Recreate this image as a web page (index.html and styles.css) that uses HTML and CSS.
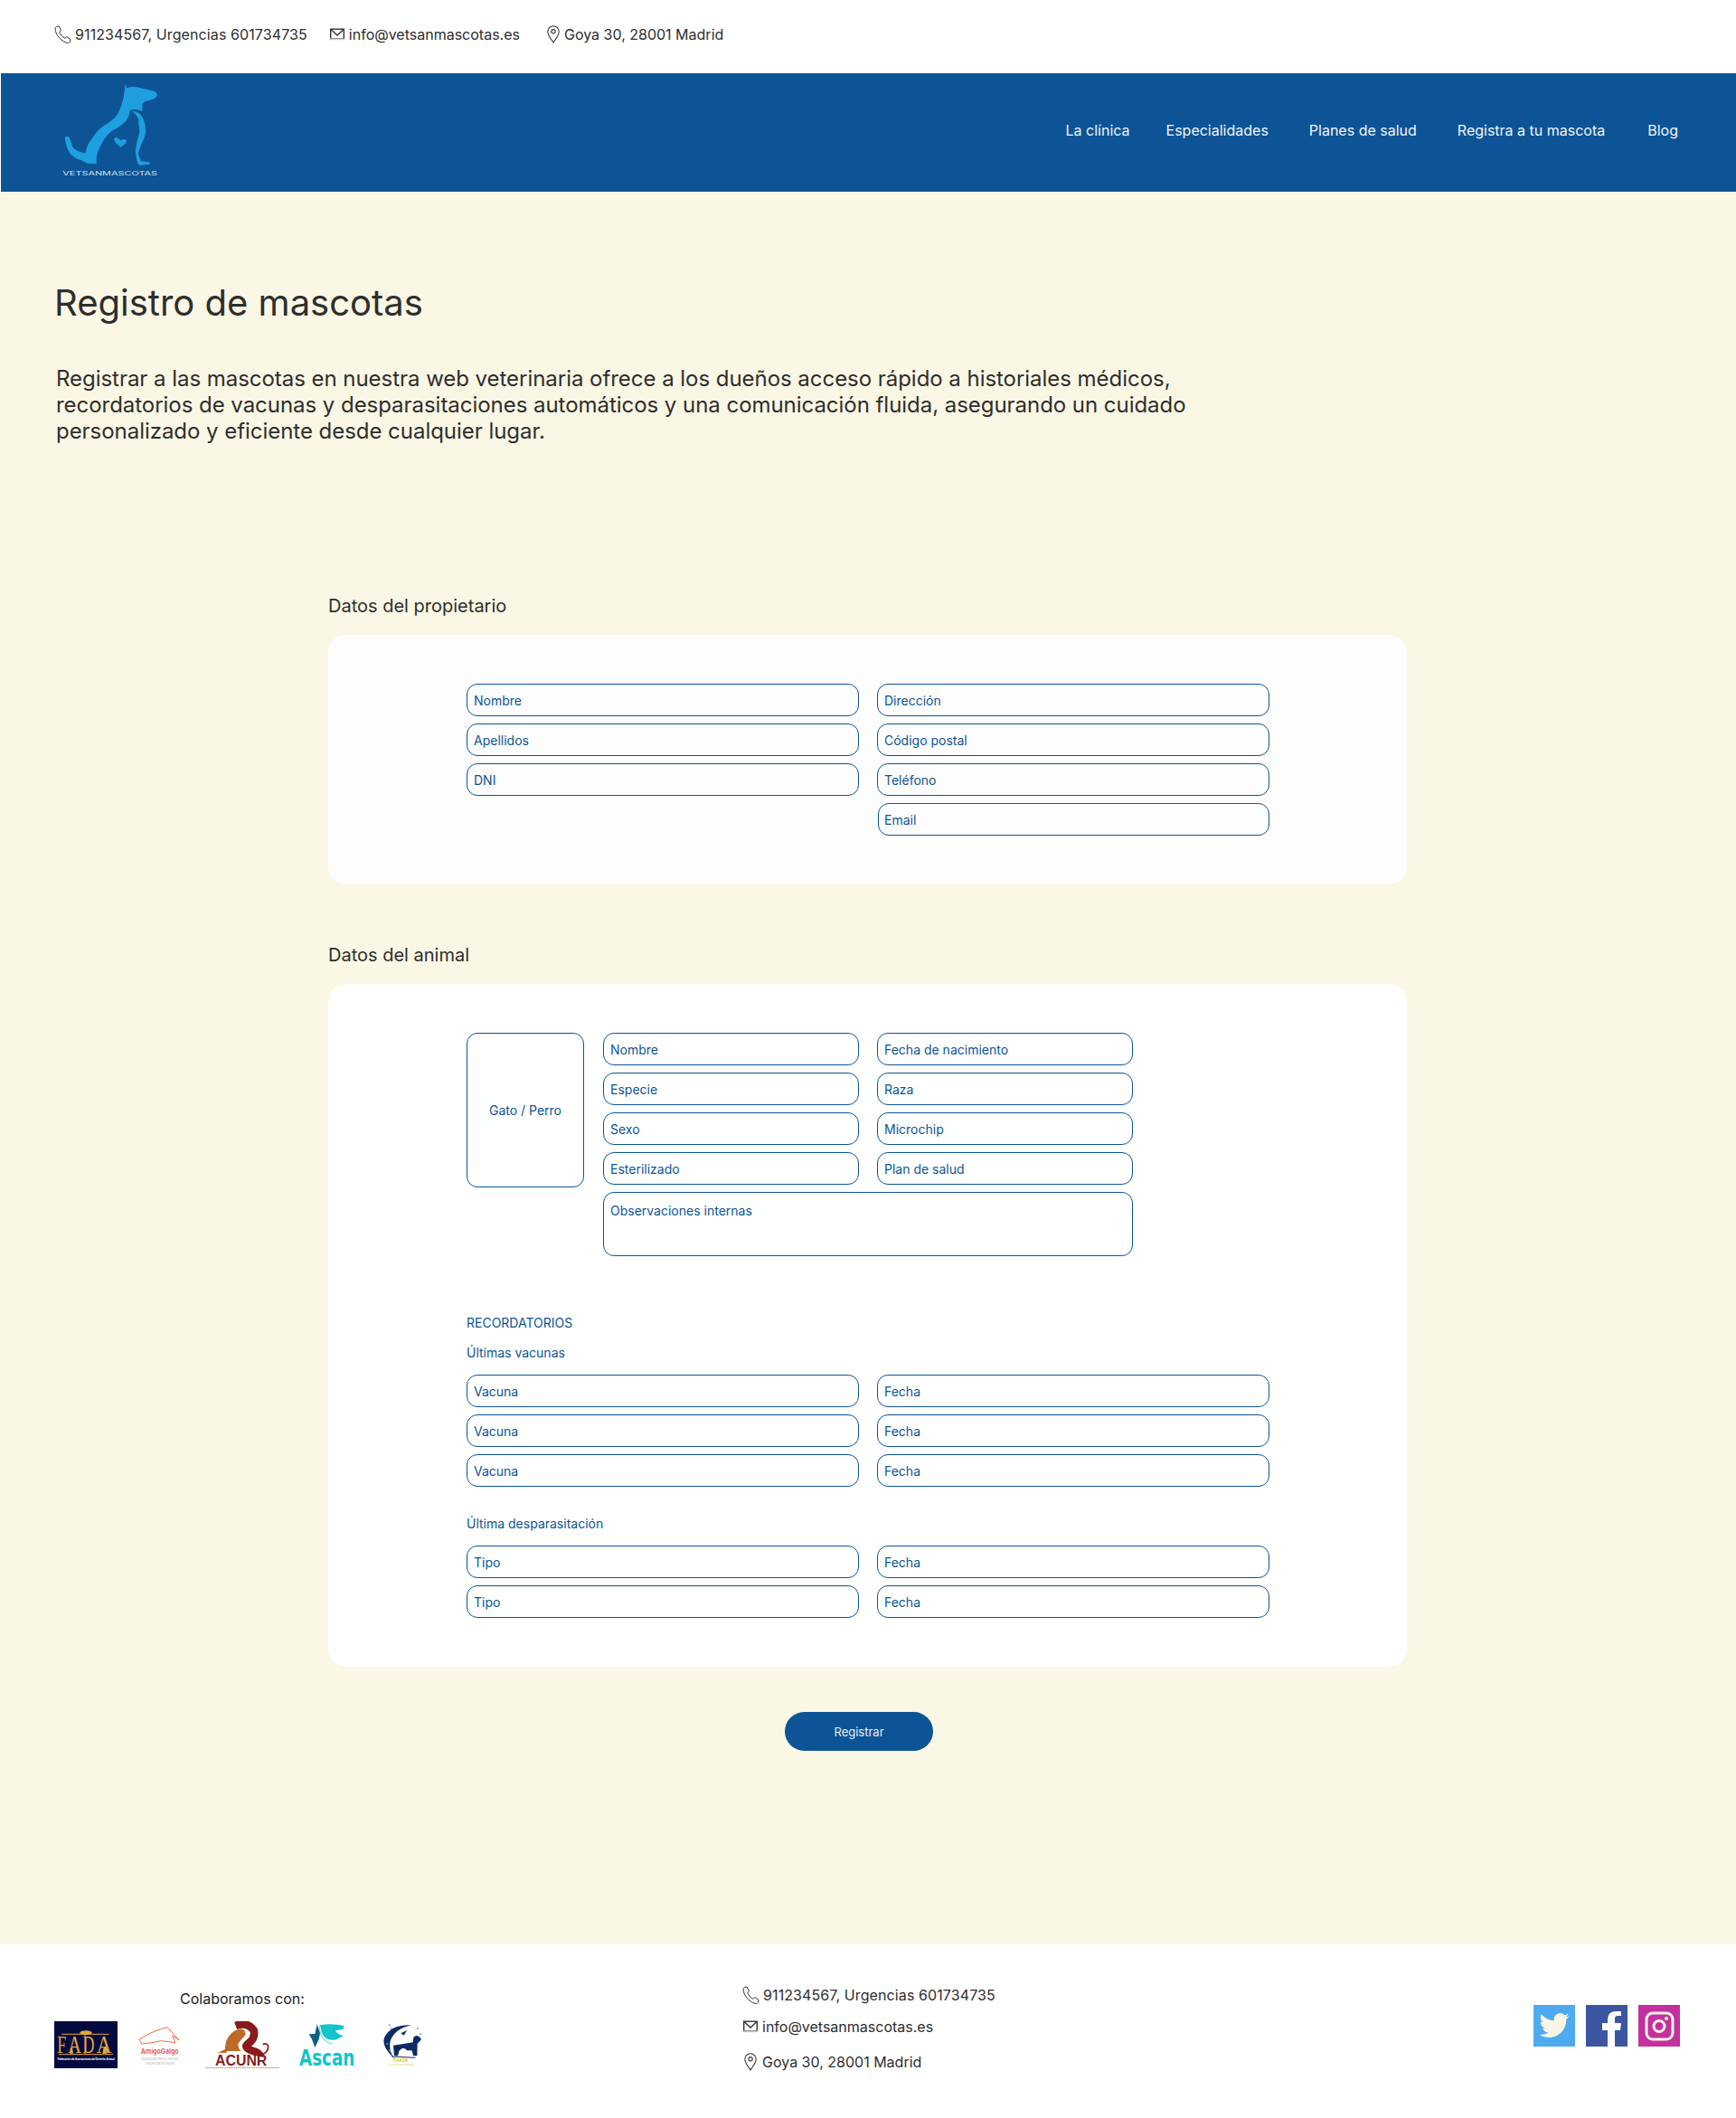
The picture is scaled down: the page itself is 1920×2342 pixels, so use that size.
FILE: index.html
```html
<!DOCTYPE html>
<html lang="es">
<head>
<meta charset="utf-8">
<title>Registro de mascotas</title>
<link rel="stylesheet" href="styles.css">
</head>
<body>
<svg class="defs" width="0" height="0" aria-hidden="true">
  <symbol id="i-phone" viewBox="0 0 20 20"><path d="M2.2 1.6 5 .9l2.6 4.6-1.9 1.7c.7 2.6 3.600 6 6.200 7.100l2-1.800 4.200 3.200-.9 2.800c-.3.700-1.100 1-1.900 1C8.800 18.800 1.200 10.800 1 3.700c0-.9.400-1.700 1.200-2.100Z" fill="none" stroke="currentColor" stroke-width="1" stroke-linejoin="round"/></symbol>
  <symbol id="i-mail" viewBox="0 0 16 14"><rect x="0.700" y="1.200" width="14.600" height="10.800" fill="none" stroke="#333" stroke-width="1.400"/><path d="M1 1.500 8 8l7-6.500" fill="none" stroke="#333" stroke-width="1.400"/><rect x="0" y="11.600" width="16" height="1.600" fill="#ccc"/></symbol>
  <symbol id="i-pin" viewBox="0 0 14 20"><path d="M7 19C4.500 15 .8 11.200.8 7a6.200 6.200 0 0 1 12.400 0C13.200 11.200 9.500 15 7 19Z" fill="none" stroke="#333" stroke-width="1.100"/><circle cx="7" cy="6.800" r="2.200" fill="none" stroke="#333" stroke-width="1.100"/></symbol>
</svg>

<header class="topbar">
  <div class="contact-item contact-phone"><svg class="icon-phone"><use href="#i-phone"/></svg><span class="phone-text">911234567, Urgencias 601734735</span></div>
  <div class="contact-item contact-mail"><svg class="icon-mail"><use href="#i-mail"/></svg><span>info@vetsanmascotas.es</span></div>
  <div class="contact-item contact-pin"><svg class="icon-pin"><use href="#i-pin"/></svg><span>Goya 30, 28001 Madrid</span></div>
</header>

<nav class="navbar">
  <svg class="logo" viewBox="0 3 480 393" role="img" aria-label="VetsanMascotas">
    <path class="logo-shape" d="M296 36 L301 52 Q322 44 345 52 L392 62 Q405 68 400 80 Q390 92 362 96 L352 104 L352 130 Q330 118 312 126 L305 150 Q295 172 250 195 Q225 215 207 258 Q198 280 200 304 L170 302 L150 292 Q125 285 113 270 Q98 245 95 218 Q100 208 110 216 L122 250 Q135 264 164 268 Q170 235 185 220 Q200 195 220 180 Q245 165 262 150 Q285 120 292 70 Z"/>
    <path class="logo-shape" d="M318 128 Q345 130 353 150 Q368 180 361 212 Q345 245 338 270 L348 295 L375 298 L378 305 L342 308 L336 300 L329 265 Q332 230 343 200 L340 170 Q345 150 318 128 Z"/>
    <path class="logo-shape" d="M280 248 Q262 235 258 222 Q262 212 272 218 L280 226 Q292 218 300 226 Q300 238 280 248 Z"/>
    <text class="logo-text" x="88" y="342" textLength="314" lengthAdjust="spacingAndGlyphs">VETSANMASCOTAS</text>
  </svg>
  <ul class="nav-links">
    <li>La clínica</li>
    <li>Especialidades</li>
    <li>Planes de salud</li>
    <li>Registra a tu mascota</li>
    <li>Blog</li>
  </ul>
</nav>

<main class="page">
  <h1 class="page-title">Registro de mascotas</h1>
  <p class="page-intro">Registrar a las mascotas en nuestra web veterinaria ofrece a los dueños acceso rápido a historiales médicos, recordatorios de vacunas y desparasitaciones automáticos y una comunicación fluida, asegurando un cuidado personalizado y eficiente desde cualquier lugar.</p>

  <section class="form-wrap">
    <h2 class="section-title">Datos del propietario</h2>
    <div class="card card-owner">
      <div class="pair-grid">
        <div class="field">Nombre</div><div class="field">Dirección</div>
        <div class="field">Apellidos</div><div class="field">Código postal</div>
        <div class="field">DNI</div><div class="field">Teléfono</div>
        <div class="spacer"></div><div class="field field-nudge">Email</div>
      </div>
    </div>

    <h2 class="section-title section-title-second">Datos del animal</h2>
    <div class="card">
      <div class="animal-top">
        <div class="field photo">Gato / Perro</div>
        <div class="animal-grid">
          <div class="field">Nombre</div><div class="field">Fecha de nacimiento</div>
          <div class="field">Especie</div><div class="field">Raza</div>
          <div class="field">Sexo</div><div class="field">Microchip</div>
          <div class="field">Esterilizado</div><div class="field">Plan de salud</div>
          <div class="field notes">Observaciones internas</div>
        </div>
      </div>

      <h3 class="reminder-head">RECORDATORIOS</h3>
      <h4 class="reminder-sub">Últimas vacunas</h4>
      <div class="pair-grid">
        <div class="field">Vacuna</div><div class="field">Fecha</div>
        <div class="field">Vacuna</div><div class="field">Fecha</div>
        <div class="field">Vacuna</div><div class="field">Fecha</div>
      </div>
      <h4 class="reminder-sub reminder-sub-second">Última desparasitación</h4>
      <div class="pair-grid">
        <div class="field">Tipo</div><div class="field">Fecha</div>
        <div class="field">Tipo</div><div class="field">Fecha</div>
      </div>
    </div>

    <button class="submit" type="button">Registrar</button>
  </section>
</main>

<footer class="footer">
  <div class="partners">
    <p class="partners-title">Colaboramos con:</p>
    <svg class="partner-logos" viewBox="180 165 1230 165" role="img" aria-label="Logos de FADA, AmigoGalgo, ACUNR, Ascan y FAADA">
      <!-- FADA -->
      <rect x="180" y="165" width="210" height="156" fill="#020b3f"/>
      <path d="M205 208 H362 M282 198 V275 M195 275 H375" fill="none" stroke="#e3a63f" stroke-width="3"/>
      <ellipse cx="285" cy="203" rx="20" ry="7" fill="#e3a63f"/>
      <text class="fada-letter" x="190" y="270" textLength="30" lengthAdjust="spacingAndGlyphs">F</text>
      <text class="fada-letter" x="226" y="270" textLength="44" lengthAdjust="spacingAndGlyphs">A</text>
      <text class="fada-letter" x="275" y="270" textLength="38" lengthAdjust="spacingAndGlyphs">D</text>
      <text class="fada-letter" x="320" y="270" textLength="50" lengthAdjust="spacingAndGlyphs">A</text>
      <path d="M233 272 V255 L240 252 L243 272 Z M340 272 L343 255 L350 250 L358 260 L354 272 Z" fill="#e3a63f"/>
      <text class="fada-caption" x="191" y="293" textLength="189" lengthAdjust="spacingAndGlyphs">Federación de Asociaciones de Derecho Animal</text>
      <!-- AmigoGalgo -->
      <path d="M462 225 Q510 195 555 185 L595 228 L572 212 L582 236 L535 230 Q500 238 470 240 Z" fill="none" stroke="#f0644a" stroke-width="3"/>
      <text class="galgo-name" x="530" y="272" textLength="126" lengthAdjust="spacingAndGlyphs">AmigoGalgo</text>
      <path d="M460 276 H600" stroke="#ddd" stroke-width="1.500"/>
      <text class="galgo-sub" x="530" y="293" textLength="125" lengthAdjust="spacingAndGlyphs">ASOCIACIÓN PARA EL RESCATE</text>
      <text class="galgo-sub" x="530" y="308" textLength="100" lengthAdjust="spacingAndGlyphs">Y ADOPCIÓN DE GALGOS</text>
      <!-- ACUNR -->
      <path d="M746 264 Q746 225 768 205 Q780 193 800 190 L812 196 L815 210 Q800 225 790 240 Q790 255 800 264 Z M722 270 L752 256 L752 270 Z" fill="#bd6a28"/>
      <path d="M782 180 Q820 165 842 195 Q848 225 822 240 Q808 252 835 262 Q865 270 862 282" fill="none" stroke="#8a1a1c" stroke-width="26"/>
      <path d="M860 278 Q890 272 890 248 Q885 235 872 242" fill="none" stroke="#8a1a1c" stroke-width="5"/>
      <text class="acunr-name" x="800" y="312" textLength="172" lengthAdjust="spacingAndGlyphs">ACUNR</text>
      <path d="M681 319.500 H928" stroke="#d9824d" stroke-width="3" stroke-dasharray="4 2"/>
      <!-- Ascan -->
      <path d="M1062 178 Q1100 170 1142 180 L1138 192 L1112 196 Q1125 212 1140 214 L1115 226 Q1080 232 1068 205 Z" fill="#13c4c8"/>
      <path d="M1060 180 Q1060 228 1102 240" fill="none" stroke="#7fe3e3" stroke-width="4"/>
      <path d="M1052 175 L1062 205 L1058 225 L1045 252 L1035 225 L1025 208 L1045 207 Z" fill="#115f85"/>
      <text class="ascan-name" x="1085" y="312" textLength="184" lengthAdjust="spacingAndGlyphs">Ascan</text>
      <!-- FAADA -->
      <path d="M1310 290 Q1265 250 1275 220 Q1295 175 1365 178 Q1310 190 1295 230 Q1288 265 1310 290 Z" fill="#0e2a66"/>
      <path d="M1305 245 Q1340 240 1370 235 L1372 218 Q1385 205 1398 225 L1385 240 L1384 280 L1372 280 L1366 262 L1325 262 L1320 280 L1308 280 Z" fill="#0e2a66"/>
      <path d="M1326 282 L1326 262 Q1338 246 1352 264 L1352 282 Z" fill="#fff"/>
      <path d="M1300 282 L1378 286" stroke="#0e2a66" stroke-width="3"/>
      <path d="M1330 205 L1350 195 L1340 212 Z" fill="#0e2a66"/>
      <g fill="#6a9fd0"><circle cx="1292" cy="178" r="3"/><circle cx="1298" cy="190" r="3"/><circle cx="1385" cy="190" r="3"/><circle cx="1395" cy="207" r="3"/><circle cx="1285" cy="240" r="3"/><circle cx="1292" cy="262" r="3"/></g>
      <text class="faada-name" x="1330" y="299" textLength="48" lengthAdjust="spacingAndGlyphs">FAADA</text>
      <text class="faada-sub" x="1332" y="311" textLength="84" lengthAdjust="spacingAndGlyphs">LA VOZ DE LOS ANIMALES</text>
    </svg>
  </div>

  <div class="footer-contact">
    <div class="contact-item footer-phone"><svg class="icon-phone"><use href="#i-phone"/></svg><span class="phone-text">911234567, Urgencias 601734735</span></div>
    <div class="contact-item footer-mail"><svg class="icon-mail"><use href="#i-mail"/></svg><span>info@vetsanmascotas.es</span></div>
    <div class="contact-item footer-pin"><svg class="icon-pin"><use href="#i-pin"/></svg><span>Goya 30, 28001 Madrid</span></div>
  </div>

  <div class="social">
    <svg class="social-icon" viewBox="0 0 46 46" role="img" aria-label="Twitter"><rect width="46" height="46" fill="#4fabf1"/><path transform="translate(6.500 6) scale(1.380)" fill="#faf6e3" d="M23.953 4.570a10 10 0 01-2.825.775 4.958 4.958 0 002.163-2.723c-.951.555-2.005.959-3.127 1.184a4.920 4.920 0 00-8.384 4.482C7.690 8.095 4.067 6.130 1.640 3.162a4.822 4.822 0 00-.666 2.475c0 1.710.870 3.213 2.188 4.096a4.904 4.904 0 01-2.228-.616v.060a4.923 4.923 0 003.946 4.827 4.996 4.996 0 01-2.212.085 4.936 4.936 0 004.604 3.417 9.867 9.867 0 01-6.102 2.105c-.390 0-.779-.023-1.170-.067a13.995 13.995 0 007.557 2.209c9.053 0 13.998-7.496 13.998-13.985 0-.210 0-.420-.015-.630A9.935 9.935 0 0024 4.590z"/></svg>
    <svg class="social-icon" viewBox="0 0 46 46" role="img" aria-label="Facebook"><rect width="46" height="46" fill="#3b55a0"/><path fill="#fff" d="M32 46V28h6l1-8h-7v-5q0-3 3-3h4V7h-5q-10 0-10 9v4h-6v8h6v18Z"/></svg>
    <svg class="social-icon" viewBox="0 0 46 46" role="img" aria-label="Instagram"><rect width="46" height="46" fill="#c4309f"/><rect x="9" y="9" width="29" height="29" rx="7" fill="none" stroke="#faf6e3" stroke-width="3"/><circle cx="23" cy="23.500" r="6" fill="none" stroke="#faf6e3" stroke-width="3"/><circle cx="31" cy="15" r="2" fill="#faf6e3"/></svg>
  </div>
</footer>
</body>
</html>
```

FILE: styles.css
```css
* { box-sizing: border-box; }
html, body { margin: 0; padding: 0; }
body {
  font-family: Inter, "Liberation Sans", sans-serif;
  color: #2e2e2e;
  background: #fff;
  width: 1920px;
}
.defs { position: absolute; }

.topbar {
  height: 81px;
  display: flex;
  align-items: center;
  padding-left: 60px;
  padding-bottom: 5px;
  font-size: 16px;
}
.contact-item { display: flex; align-items: center; white-space: nowrap; }
.phone-text { letter-spacing: 0.1px; }
.icon-phone { width: 20px; height: 20px; color: #333; flex: none; }
.icon-mail { width: 16px; height: 14px; flex: none; }
.icon-pin { width: 14px; height: 20px; flex: none; }
.contact-phone { gap: 3px; }
.contact-mail { gap: 5px; margin-left: 25px; }
.contact-pin { gap: 5px; margin-left: 30px; }

.navbar {
  height: 131px;
  margin-left: 1px;
  background: #0c5496;
  display: flex;
  align-items: center;
  justify-content: space-between;
  padding: 0 64px 5px 39px;
}
.logo { width: 160px; height: 131px; margin-bottom: -5px; flex: none; }
.logo-shape { fill: #1e9fdf; }
.logo-text { font-size: 20px; fill: #d5e3f0; }
.nav-links {
  list-style: none;
  margin: 0;
  padding: 0;
  display: flex;
  gap: 45px;
  color: #f1f5f9;
  font-size: 16px;
}
.nav-links li:first-child { margin-right: -5px; }
.nav-links li:last-child { margin-left: 2px; }

.page { background: #faf7e4; height: 1938px; padding-top: 99px; overflow: hidden; }
.page-title {
  margin: 0 0 0 60px;
  font-size: 40px;
  line-height: 48px;
  font-weight: 400;
}
.page-intro {
  margin: 45px 0 0 62px;
  width: 1320px;
  font-size: 24px;
  line-height: 29px;
  letter-spacing: -0.04px;
}
.form-wrap { width: 1193px; margin: 167px 0 0 363px; }
.section-title {
  margin: 0 0 20px;
  font-size: 20px;
  line-height: 24px;
  font-weight: 400;
}
.section-title-second { margin-top: 66px; }
.card {
  background: #fff;
  border-radius: 20px;
  padding: 54px 153px;
}
.card-owner { background: #fdfdfd; }

.pair-grid {
  display: grid;
  grid-template-columns: 434px 434px;
  column-gap: 20px;
  row-gap: 8px;
}
.field {
  height: 36px;
  border: 1px solid #0c5496;
  border-radius: 12px;
  padding: 0 7px;
  display: flex;
  align-items: center;
  color: #0c5496;
  font-size: 14px;
  line-height: 17px;
}
.field-nudge { margin-left: 1px; padding-left: 6px; }
.animal-top { display: flex; gap: 21px; align-items: flex-start; }
.photo { width: 130px; height: 171px; justify-content: center; flex: none; }
.animal-grid {
  display: grid;
  grid-template-columns: 283px 283px;
  column-gap: 20px;
  row-gap: 8px;
}
.notes { grid-column: 1 / -1; height: 71px; align-items: flex-start; padding-top: 11px; }
.reminder-head {
  margin: 65px 0 0;
  font-size: 14px;
  line-height: 17px;
  font-weight: 400;
  color: #0c5496;
}
.reminder-sub {
  margin: 16px 0 16px;
  font-size: 14px;
  line-height: 17px;
  font-weight: 400;
  color: #0c5496;
}
.reminder-sub-second { margin: 32px 0 16px; }
.submit {
  display: block;
  width: 164px;
  height: 43px;
  margin: 50px 0 0 505px;
  border: 0;
  border-radius: 22px;
  background: #0c5496;
  color: #e8eef5;
  font-family: inherit;
  font-size: 13px;
}

.footer {
  height: 192px;
  background: #fff;
  display: flex;
  align-items: flex-start;
  padding: 0 60px;
  font-size: 16px;
}
.partners { width: 760px; padding-top: 50px; }
.partners-title { margin: 0 0 15px 139px; line-height: 20px; color: #1a1a1a; }
.partner-logos { display: block; width: 410px; height: 55px; }
.footer-contact { width: 877px; padding-top: 46px; }
.footer-phone { gap: 3px; margin-left: 1px; height: 20px; }
.footer-mail { gap: 5px; margin: 15px 0 0 2px; height: 20px; }
.footer-pin { gap: 6px; margin: 19px 0 0 3px; height: 20px; }
.social { display: flex; gap: 12px; padding-top: 67px; margin-left: -1px; }
.social-icon { width: 46px; height: 46px; display: block; }

.fada-letter { font-family: "Liberation Serif", serif; font-size: 84px; fill: #e3a63f; }
.fada-caption { font-size: 10px; font-weight: 700; fill: #fff; }
.galgo-name { font-size: 24px; font-weight: 700; fill: #f0644a; text-anchor: middle; }
.galgo-sub { font-size: 11px; fill: #a9a9a9; text-anchor: middle; }
.acunr-name { font-family: "Liberation Sans", sans-serif; font-size: 48px; font-weight: 700; fill: #8a1a1c; text-anchor: middle; }
.ascan-name { font-family: "DejaVu Sans", sans-serif; font-size: 76px; font-weight: 700; fill: #13c4c8; text-anchor: middle; }
.faada-name { font-size: 15px; font-weight: 700; fill: #d8cc20; text-anchor: middle; }
.faada-sub { font-size: 8px; fill: #d8cc20; text-anchor: middle; }
```
